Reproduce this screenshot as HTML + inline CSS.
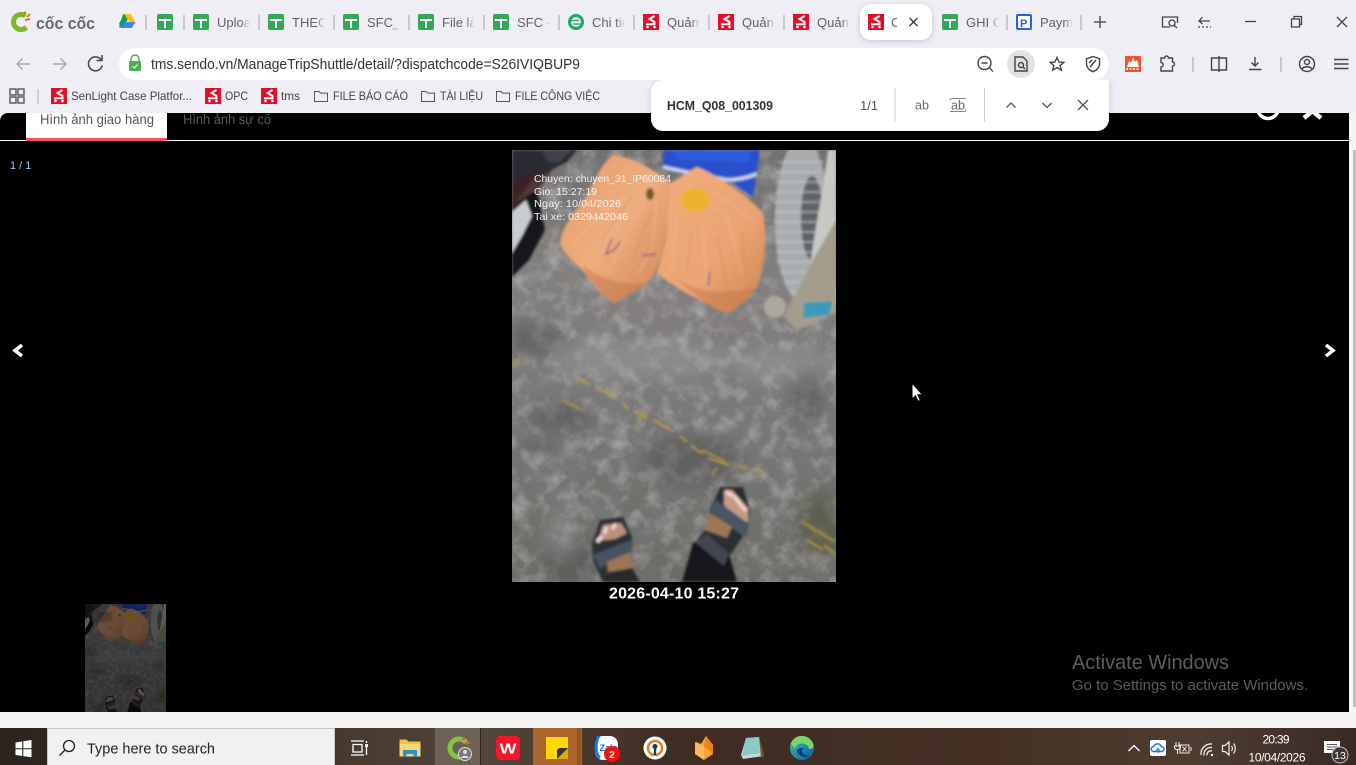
<!DOCTYPE html>
<html><head><meta charset="utf-8"><title>Trip detail</title>
<style>
html,body{margin:0;padding:0;width:1356px;height:765px;overflow:hidden;background:#eeeef4}
svg{display:block;font-family:"Liberation Sans","Noto Sans CJK SC",sans-serif}
</style></head>
<body>
<svg width="1356" height="765" viewBox="0 0 1356 765" xmlns="http://www.w3.org/2000/svg">
<defs>
<linearGradient id="fade"><stop offset="0" stop-color="#eeeef4" stop-opacity="0"/><stop offset="1" stop-color="#eeeef4"/></linearGradient>
<linearGradient id="floor" x1="0" y1="0" x2="0" y2="1"><stop offset="0" stop-color="#6f6d6a"/><stop offset=".3" stop-color="#84817f"/><stop offset=".6" stop-color="#7a7878"/><stop offset="1" stop-color="#6b6a64"/></linearGradient>
<linearGradient id="tb"><stop offset="0" stop-color="#2c231f"/><stop offset=".26" stop-color="#483a2f"/><stop offset=".36" stop-color="#524539"/><stop offset=".5" stop-color="#3f2c23"/><stop offset=".72" stop-color="#452f25"/><stop offset=".88" stop-color="#4e3d30"/><stop offset="1" stop-color="#392a26"/></linearGradient>
<linearGradient id="bag1" x1="0" y1="0" x2="1" y2="1"><stop offset="0" stop-color="#e49a68"/><stop offset=".5" stop-color="#eeae80"/><stop offset="1" stop-color="#cf8455"/></linearGradient>
<linearGradient id="bag2" x1="0" y1="0" x2="1" y2="1"><stop offset="0" stop-color="#f0ad7d"/><stop offset=".6" stop-color="#eba473"/><stop offset="1" stop-color="#d08353"/></linearGradient>
<linearGradient id="edg" x1="0" y1="0" x2="1" y2="1"><stop offset="0" stop-color="#36c8b0"/><stop offset="1" stop-color="#0c59a4"/></linearGradient>
<filter id="noise" x="0" y="0" width="100%" height="100%"><feTurbulence type="fractalNoise" baseFrequency=".028" numOctaves="5" seed="7"/><feColorMatrix values="0 0 0 0 .2  0 0 0 0 .2  0 0 0 0 .21  1.3 0 0 0 -.45"/></filter>
<filter id="noise2" x="0" y="0" width="100%" height="100%"><feTurbulence type="fractalNoise" baseFrequency=".06" numOctaves="4" seed="21"/><feColorMatrix values="0 0 0 0 .68  0 0 0 0 .67  0 0 0 0 .67  1 0 0 0 -.44"/></filter>
<filter id="b1"><feGaussianBlur stdDeviation="1.2"/></filter>
<filter id="b3"><feGaussianBlur stdDeviation="3"/></filter>
<filter id="b8"><feGaussianBlur stdDeviation="8"/></filter>
<filter id="sh" x="-20%" y="-20%" width="140%" height="150%"><feDropShadow dx="0" dy="1" stdDeviation="3" flood-color="#000" flood-opacity=".18"/></filter>
<clipPath id="pc"><rect width="324" height="432"/></clipPath>
<clipPath id="pageclip"><rect x="0" y="113" width="1349" height="599"/></clipPath>
<clipPath id="findclip"><rect x="630" y="80" width="726" height="70"/></clipPath>

<symbol id="gs" viewBox="0 0 16 16" overflow="visible"><rect width="16" height="16" rx="2" fill="#34a853"/><path d="M2 6h12M8 6v8" stroke="#fff" stroke-width="2" fill="none"/></symbol>
<symbol id="sd" viewBox="0 0 16 16" overflow="visible"><rect width="16" height="16" fill="#e20d26"/><path d="M11.500 2 6.500 5l5 3v2.200H3" stroke="#fff" stroke-width="2" fill="none"/><circle cx="4.500" cy="13" r="1.300" fill="#fff"/><circle cx="11.500" cy="13" r="1.300" fill="#fff"/></symbol>
<symbol id="fd" viewBox="0 0 14 12" overflow="visible"><path d="M.5 1.500h4.500l1.500 1.600h7v8.400H.5z" fill="none" stroke="#555" stroke-width="1"/></symbol>

<g id="photo" clip-path="url(#pc)">
 <rect width="324" height="432" fill="url(#floor)"/>
 <rect width="324" height="432" filter="url(#noise)"/>
 <rect width="324" height="432" filter="url(#noise2)"/>
 <g filter="url(#b8)" fill="#4e4d4e" opacity=".5">
  <ellipse cx="50" cy="267" rx="34" ry="14"/><ellipse cx="27" cy="298" rx="20" ry="7"/><ellipse cx="295" cy="245" rx="16" ry="30"/><ellipse cx="180" cy="310" rx="50" ry="25"/>
  <ellipse cx="20" cy="190" rx="30" ry="18"/><ellipse cx="310" cy="375" rx="25" ry="35" fill="#4d5038"/><ellipse cx="60" cy="410" rx="30" ry="25"/>
 </g>
 <g filter="url(#b8)" fill="#a3a1a3" opacity=".4"><ellipse cx="50" cy="385" rx="16" ry="26"/><ellipse cx="130" cy="210" rx="90" ry="20"/><ellipse cx="270" cy="215" rx="50" ry="18"/></g>
 <g filter="url(#b1)">
  <path d="M65 228l20 10 18 8 12 12 30 14 22 13 18 15 14 9 14 5 12 2 26 5" fill="none" stroke="#c2a03f" stroke-width="2.200" stroke-dasharray="14 7 22 9 9 6" opacity=".85"/>
  <path d="M50 250l20 10M125 270l10-6M190 300l24 12M200 325l5-7M222 336l3 8M0 215l8-6" fill="none" stroke="#b89a40" stroke-width="1.800"/>
  <path d="M290 372l25 15 9 5M295 390l16 10M312 395l12 10" fill="none" stroke="#9c8a40" stroke-width="3"/>

  <path d="M151 0h97l-7 47-20-14-70-13z" fill="#2a4fcb"/>
  <path d="M151 17c20 5 45 9 64 13 10 0 22-3 30-6" fill="none" stroke="#cdd7ea" stroke-width="3.500"/>
  <path d="M160 0h80l-3 12-70-2z" fill="#2d5be0"/>

  <path d="M0 0h65L55 12 20 30 0 56z" fill="#292c33"/><path d="M0 55 25 40l8 40-16 30L0 127z" fill="#17181b"/><path d="M0 62 14 50l6 16-10 20L0 103z" fill="#c9cdd2"/><path d="M30 0h30L48 12 36 12z" fill="#3f4248"/><path d="M0 30 40 20 30 35 0 60z" fill="#3f2020" opacity=".7"/>

  <path d="M101 5C125 8 145 22 158 33L155 73C152 100 148 120 135 133 122 140 110 150 101 153 90 145 80 135 75 125 60 110 48 100 48 93 50 75 65 60 72 50 80 35 88 15 101 5z" fill="url(#bag1)"/>
  <path d="M185 17C205 25 235 45 251 63 255 85 254 110 245 137 235 150 225 158 218 162 208 163 200 157 195 153 175 145 160 135 145 123 150 105 155 90 155 73L158 33C165 30 175 22 185 17z" fill="url(#bag2)"/>
  <path d="M70 115c20 15 40 20 65 18-12 8-24 16-34 20-10-8-22-20-31-38zM160 127c20 12 40 20 85 10-8 12-18 20-27 25-10 1-18-5-23-9z" fill="#c67a4b" opacity=".55"/>
  <path d="M130 40l-30 15-40 40M135 45l-20 40-20 40M145 50l-5 50-15 25M165 60l-5 60M190 70l5 70M215 65l15 60M175 35l35 30M200 40l40 30" fill="none" stroke="#f7c8a2" stroke-width="1.400" opacity=".4"/>
  <path d="M120 45l-30 45M140 60l-20 50M180 80l-5 40M205 85l10 55M230 80l5 50" fill="none" stroke="#c9824f" stroke-width="1.400" opacity=".4"/>
  <ellipse cx="183" cy="50" rx="15" ry="12" fill="#eeb230"/><ellipse cx="138" cy="44" rx="4" ry="6" fill="#6e5c28"/>
  <path d="M100 88l-6 16 8-4 6-8M130 106l14-2M198 122l-2 14" fill="none" stroke="#6d3a8a" stroke-width="1.200"/>

  <ellipse cx="290" cy="70" rx="27" ry="82" fill="#a9acae"/>
  <ellipse cx="300" cy="68" rx="11" ry="42" fill="#5f6469"/>
  <g stroke="#cfd1d2" stroke-width="1.300" opacity=".75" fill="none"><path d="M266 12h46M264 22h46M263 32h46M263 42h46M262 52h46M262 62h46M262 72h46M262 82h46M263 92h46M264 102h44M265 112h42M268 122h36M272 132h30M278 142h20"/></g>
  <path d="M316 0h8v70l-26 47c5-40 14-80 18-117z" fill="#c8c8c4"/>
  <path d="M298 115l26-45v93l-39 17-13-13z" fill="#a59d8c"/>
  <circle cx="263" cy="157" r="11" fill="#aea79d"/>
  <path d="M292 153l28-2-2 14-27 3z" fill="#3d9ab6"/>
 </g>
 <g filter="url(#b1)">
  <path d="M208 337l23 0 7 23-3 20-20 30-30-20 10-13 3-17z" fill="#2c2f34"/>
  <path d="M212 340l8 0 16 18 0 14-10-2-14-15z" fill="#c49a88"/><path d="M214 342l7 4M222 346l6 8M228 354l6 7" stroke="#f1d7cf" stroke-width="3.400"/>
  <path d="M204 350l33 24-3 14-36-26z" fill="#495563"/>
  <path d="M198 363l22 14-5 11-22-8z" fill="#9d7656"/>
  <path d="M170 432l11-39 14-6 23 20 7 25z" fill="#15161b"/><path d="M183 392l12-8 22 20-5 12z" fill="#3f4650"/>
  <path d="M80 393l8-23 23-3 9 20v30l8 15H91l-10-22z" fill="#2b3036"/>
  <path d="M86 391l5-16 18-2 6 10-12 6z" fill="#b9907e"/><path d="M85 392l5-6M92 384l3-7M100 379l4-5" stroke="#eed5cc" stroke-width="3.800"/>
  <path d="M81 405l38-15 1 13-32 15z" fill="#465361"/>
  <path d="M95 412l24-10 2 16-25 4z" fill="#9b7556"/>
  <path d="M92 432l4-8 22-6 10 14z" fill="#262a2f"/>
 </g>
</g>
</defs>

<!-- window chrome background -->
<rect width="1356" height="765" fill="#eeeef4"/>

<!-- Coc Coc logo -->
<circle cx="21" cy="22" r="7.500" fill="none" stroke="#7ab82e" stroke-width="5" stroke-dasharray="34 14" transform="rotate(45 21 22)"/>
<path d="M24 13l2-1M27 17l3-3M25 20l5-1" stroke="#e8622a" stroke-width="1.800"/>
<text x="36" y="29" font-size="17" font-weight="bold" fill="#6a6a6a" textLength="59" lengthAdjust="spacingAndGlyphs">cốc cốc</text>

<!-- drive -->
<path d="M123 14h8l-4 7-4 7-4-1z" fill="#1fa463"/><path d="M123 14h8l5 10-4.500 0z" fill="#ffc107"/><path d="M119.500 27l3-5h12.500l-3 6h-11z" fill="#4285f4"/><path d="M124 14l-5 10 3 3 5-9z" fill="#0f9d58"/>

<!-- tab icons -->
<use href="#gs" x="157" y="14" width="16" height="16"/><use href="#gs" x="193" y="14" width="16" height="16"/><use href="#gs" x="268" y="14" width="16" height="16"/><use href="#gs" x="343" y="14" width="16" height="16"/><use href="#gs" x="418" y="14" width="16" height="16"/><use href="#gs" x="493" y="14" width="16" height="16"/>
<circle cx="576" cy="22" r="6.500" fill="none" stroke="#1aa867" stroke-width="3"/><path d="M571 20.500h8M573 24h8" stroke="#1aa867" stroke-width="1.300"/>
<use href="#sd" x="643" y="14" width="16" height="16"/><use href="#sd" x="718" y="14" width="16" height="16"/><use href="#sd" x="793" y="14" width="16" height="16"/>

<g font-size="13" fill="#5f6368">
<text x="217" y="27">Upload</text><text x="292" y="27">THEO</text><text x="367" y="27">SFC_T</text><text x="442" y="27">File là</text><text x="517" y="27">SFC -</text><text x="592" y="27">Chi tiết</text><text x="667" y="27">Quản</text><text x="742" y="27">Quản</text><text x="817" y="27">Quản</text><text x="966" y="27">GHI C</text><text x="1040" y="27">Payment</text>
</g>
<g fill="url(#fade)"><rect x="241" y="12" width="9" height="20"/><rect x="316" y="12" width="9" height="20"/><rect x="391" y="12" width="9" height="20"/><rect x="466" y="12" width="9" height="20"/><rect x="541" y="12" width="9" height="20"/><rect x="616" y="12" width="9" height="20"/><rect x="691" y="12" width="9" height="20"/><rect x="766" y="12" width="9" height="20"/><rect x="841" y="12" width="9" height="20"/><rect x="990" y="12" width="9" height="20"/><rect x="1064" y="12" width="9" height="20"/></g>
<g fill="#eeeef4"><rect x="250" y="12" width="17" height="20"/><rect x="325" y="12" width="17" height="20"/><rect x="400" y="12" width="17" height="20"/><rect x="475" y="12" width="17" height="20"/><rect x="550" y="12" width="17" height="20"/><rect x="625" y="12" width="17" height="20"/><rect x="700" y="12" width="17" height="20"/><rect x="775" y="12" width="17" height="20"/><rect x="850" y="12" width="9" height="20"/><rect x="999" y="12" width="16" height="20"/><rect x="1073" y="12" width="19" height="20"/></g>
<!-- separators -->
<g stroke="#b8b8bf" stroke-width="1.400"><path d="M146 15v15M184 15v15M259 15v15M334 15v15M409 15v15M484 15v15M559 15v15M634 15v15M709 15v15M784 15v15M1007 15v15M1081 15v15"/></g>

<!-- active tab -->
<rect x="860" y="4" width="72" height="36" rx="11" fill="#fff" filter="url(#sh)"/>
<use href="#sd" x="868" y="14" width="16" height="16"/>
<text x="891" y="27" font-size="13" fill="#5f6368">C</text><rect x="897" y="12" width="8" height="20" fill="#fff"/>
<path d="M909.500 18l8 8M917.500 18l-8 8" stroke="#333" stroke-width="1.300"/>
<use href="#gs" x="942" y="14" width="16" height="16"/>
<rect x="1016" y="14" width="16" height="16" rx="2" fill="#2d5be3"/><rect x="1018" y="16" width="12" height="12" fill="#fff"/><text x="1020" y="27" font-size="11" font-weight="bold" fill="#2d5be3">P</text>
<path d="M1100 16v12M1094 22h12" stroke="#555" stroke-width="1.500"/>

<!-- titlebar right -->
<g fill="none" stroke="#444" stroke-width="1.300">
<path d="M1170 27h-7.500v-10h15v6"/><circle cx="1172" cy="23" r="3"/><path d="M1174 25l3 3"/>
<path d="M1210 21h-11m3.500-4l-3.500 4 3.500 3M1198 27h2m2 0h2m2 0h2m2 0h1" />
<path d="M1245 21.500h11"/>
<path d="M1291.500 19h8v8h-8zM1294 19v-2.500h7.500v8H1299.500"/>
<path d="M1337 17l10 10M1347 17l-10 10"/>
</g>

<!-- nav -->
<g fill="none" stroke-width="1.500">
<path d="M30 64H17m5.500-5.500L17 64l5.500 5.500" stroke="#a9a9ae"/>
<path d="M53 64h13m-5.500-5.500L66 64l-5.500 5.500" stroke="#a9a9ae"/>
<path d="M101 59.500a7 7 0 1 0 1.300 6" stroke="#444"/><path d="M102 55v5.500h-5.500" stroke="#444"/>
</g>
<rect x="119" y="48" width="990" height="32" rx="16" fill="#fff"/>
<path d="M131 62v-3a4 4 0 0 1 8 0v3" fill="none" stroke="#4caf50" stroke-width="1.500"/><rect x="129" y="61" width="12" height="10" rx="1.500" fill="#4caf50"/><path d="M132.500 66l2 2 3-3.500" stroke="#fff" fill="none"/>
<text x="151" y="69" font-size="14.500" fill="#333" textLength="429" lengthAdjust="spacingAndGlyphs">tms.sendo.vn/ManageTripShuttle/detail/?dispatchcode=S26IVIQBUP9</text>

<circle cx="1021" cy="64" r="14" fill="#e2e2e2"/>
<g fill="none" stroke="#444" stroke-width="1.400">
<circle cx="984.500" cy="63" r="6.500"/><path d="M981.500 63h6M989.500 68l3.500 3.500"/>
<path d="M1015 57h8l4 4v10h-12z"/><circle cx="1021" cy="65" r="2.500"/><path d="M1023 67l2 2"/>
<path d="M1057 57.500l2 4.500 4.800.4-3.700 3.100 1.200 4.700-4.300-2.600-4.300 2.600 1.200-4.700-3.700-3.100 4.800-.4z"/>
<path d="M1093 56.500l6.500 2.200v5c0 4-3 6.500-6.500 8-3.500-1.500-6.500-4-6.500-8v-5z"/><path d="M1090 67l6-7M1089 63l3-3" />
<path d="M1161 59h3.500a2 2 0 0 1 4 0h4v4a2 2 0 0 1 0 4v5h-11.500v-4a2.200 2.200 0 0 0 0-4.500z" transform="translate(0 -1)"/>
<path d="M1211.500 58h15v12h-15zM1219 56v16"/>
<path d="M1255 57v9m-3.500-3.500 3.500 3.500 3.500-3.500M1249 69.500h12.500"/>
<circle cx="1307" cy="64" r="7.500"/><circle cx="1307" cy="62" r="2.500"/><path d="M1302 69c2-3 8-3 10 0"/>
<path d="M1334 59.500h14.500M1334 64h14.500M1334 68.500h14.500" stroke-width="1.600"/>
</g>
<path d="M1125 56h16v16h-16z" fill="#f0532a"/><path d="M1127 67l2-6 2 2 2-6 2 5 2-2 2 7z" fill="#fff"/><path d="M1126 69h14" stroke="#fff" stroke-dasharray="2 1.500" stroke-width="1.500"/>
<path d="M1193 57v15M1281 57v15" stroke="#bbb" stroke-width="1.500"/>

<!-- bookmarks -->
<g fill="none" stroke="#555" stroke-width="1.400"><rect x="10" y="89" width="6" height="6"/><rect x="18" y="89" width="6" height="6"/><rect x="10" y="97" width="6" height="6"/><rect x="18" y="97" width="6" height="6"/></g>
<path d="M38 89v15" stroke="#bbb" stroke-width="1.200"/>
<use href="#sd" x="51" y="88" width="16" height="16"/><use href="#sd" x="205" y="88" width="16" height="16"/><use href="#sd" x="261" y="88" width="16" height="16"/>
<use href="#fd" x="314" y="90" width="14" height="12"/><use href="#fd" x="421" y="90" width="14" height="12"/><use href="#fd" x="496" y="90" width="14" height="12"/>
<g font-size="12" fill="#444">
<text x="71" y="100" textLength="121" lengthAdjust="spacingAndGlyphs">SenLight Case Platfor...</text>
<text x="225" y="100" textLength="23" lengthAdjust="spacingAndGlyphs">OPC</text><text x="281" y="100" textLength="19" lengthAdjust="spacingAndGlyphs">tms</text>
<text x="333" y="100" textLength="75" lengthAdjust="spacingAndGlyphs">FILE BÁO CÁO</text>
<text x="440" y="100" textLength="43" lengthAdjust="spacingAndGlyphs">TÀI LIỆU</text>
<text x="515" y="100" textLength="85" lengthAdjust="spacingAndGlyphs">FILE CÔNG VIỆC</text>
</g>

<!-- page -->
<rect x="0" y="113" width="1356" height="615" fill="#f4f4f4"/>
<path d="M0 121a8 8 0 0 1 8-8H1349V712H0z" fill="#000"/>
<rect x="1353" y="150" width="3" height="557" fill="#c1c1c1"/>
<g clip-path="url(#pageclip)">
 <rect x="26" y="100" width="141" height="38" fill="#fff"/>
 <rect x="26" y="138" width="141" height="3" fill="#f0545e"/>
 <text x="40" y="124" font-size="13.500" fill="#555" textLength="114" lengthAdjust="spacingAndGlyphs">Hình ảnh giao hàng</text>
 <text x="183" y="124" font-size="13.500" fill="#5a5a5a" textLength="88" lengthAdjust="spacingAndGlyphs">Hình ảnh sự cố</text>
 <circle cx="1268" cy="108" r="10.500" fill="none" stroke="#fff" stroke-width="3.500"/>
 <path d="M1304 104l17 14M1321 104l-17 14" stroke="#fff" stroke-width="4.500"/>
</g>
<rect x="167" y="140" width="1182" height="1" fill="#fff"/><rect x="0" y="140" width="26" height="1" fill="#fff"/>
<text x="10" y="169" font-size="11" fill="#9cc8ee">1 / 1</text>

<use href="#photo" transform="translate(512 150)"/>
<g transform="translate(512 150)" font-size="10.300" fill="#f2f2f2">
<text x="22" y="32" textLength="137" lengthAdjust="spacingAndGlyphs">Chuyen: chuyen_31_IP60084</text>
<text x="22" y="45" textLength="63" lengthAdjust="spacingAndGlyphs">Gio: 15:27:19</text>
<text x="22" y="57" textLength="87" lengthAdjust="spacingAndGlyphs">Ngay: 10/04/2026</text>
<text x="22" y="70" textLength="94" lengthAdjust="spacingAndGlyphs">Tai xe: 0329442046</text>
</g>
<text x="674" y="598.500" font-size="16" font-weight="bold" fill="#fff" text-anchor="middle" textLength="130">2026-04-10 15:27</text>

<use href="#photo" transform="translate(85 604) scale(.25)" opacity=".45"/>
<g fill="#222" opacity=".35" filter="url(#b1)"><rect x="90" y="612" width="22" height="10"/></g>

<path d="M22 345l-7 5.500 7 5.500" fill="none" stroke="#fff" stroke-width="3.500"/>
<path d="M1326 345l7 5.500-7 5.500" fill="none" stroke="#fff" stroke-width="3.500"/>

<text x="1072" y="669" font-size="20" fill="#5d5d5d" textLength="157" lengthAdjust="spacingAndGlyphs">Activate Windows</text>
<text x="1072" y="690" font-size="14.500" fill="#5d5d5d" textLength="236" lengthAdjust="spacingAndGlyphs">Go to Settings to activate Windows.</text>
<!-- cursor -->
<path d="M912 383v16l3.500-3.300 2.500 5.600 2.300-1-2.500-5.500h4.700z" fill="#fff" stroke="#000" stroke-width="1"/>

<!-- find bar -->
<g clip-path="url(#findclip)"><path d="M663 80H1109V119a12 12 0 0 1-12 12H663a12 12 0 0 1-12-12V92a12 12 0 0 1 12-12z" fill="#fff" filter="url(#sh)"/></g>
<text x="667" y="110" font-size="13" font-weight="bold" fill="#333" textLength="106" lengthAdjust="spacingAndGlyphs">HCM_Q08_001309</text>
<text x="860" y="110" font-size="13" fill="#555" textLength="18">1/1</text>
<path d="M895 88v34M984.500 88v34" stroke="#cfcfcf" stroke-width="1"/>
<text x="915" y="109.500" font-size="12.500" fill="#666">ab</text>
<text x="951" y="109.500" font-size="12.500" fill="#666">ab</text>
<path d="M950 100.500c0-1.500 1-2 2-2h14M966 109.500c0 1.500-1 2-2 2h-14" fill="none" stroke="#888" stroke-width="1"/>
<g fill="none" stroke="#555" stroke-width="1.300"><path d="M1006.500 107.500l4.500-4.500 4.500 4.500M1042.500 103l4.500 4.500 4.500-4.500M1078 100l10 10M1088 100l-10 10"/></g>

<!-- taskbar -->
<rect y="728" width="1356" height="37" fill="url(#tb)"/>
<path d="M15.500 742.500l6.700-1v6.700h-6.700zM23.300 741.300l8.200-1.300v8.200h-8.200zM15.500 749.300h6.700v6.700l-6.700-1zM23.300 749.300h8.200v8l-8.200-1.200z" fill="#fff"/>
<rect x="47.500" y="728.500" width="287" height="37" fill="#f1f1f1" stroke="#c4c4c4"/>
<circle cx="69" cy="746" r="5.500" fill="none" stroke="#222" stroke-width="1.300"/><path d="M65 750l-5.500 5.500" stroke="#222" stroke-width="1.300"/>
<text x="87" y="753.500" font-size="14.500" fill="#222" textLength="128" lengthAdjust="spacingAndGlyphs">Type here to search</text>
<g fill="none" stroke="#fff" stroke-width="1.300"><path d="M351 741h13M353 744.500h9v7.500h-9zM351 755h13M366.500 741v2M366.500 747v8"/></g><rect x="365" y="744" width="3" height="3" fill="#fff"/>
<path d="M399.500 739.500h7l2 2h12v15h-21z" fill="#f2be47"/><path d="M399.500 744h21v12.500h-21z" fill="#f7d774"/><path d="M403 750h14v7h-3.500v-3h-7v3H403z" fill="#2a8fd8"/>
<rect x="435" y="728" width="45" height="37" fill="#6b6155"/><path d="M480 728h1v37h-1z" fill="#2f2620"/>
<circle cx="459" cy="748" r="9" fill="none" stroke="#82c341" stroke-width="5" stroke-dasharray="44 14" transform="rotate(40 459 748)"/>
<path d="M462 740l3-2M466 744l4-2" stroke="#e8622a" stroke-width="2"/>
<circle cx="465" cy="754" r="6.500" fill="#777" stroke="#ddd"/><circle cx="465" cy="752" r="2" fill="#ddd"/><path d="M461 758c1-3 7-3 8 0" fill="#ddd"/>
<rect x="496" y="736" width="24" height="24" rx="4" fill="#f5142b"/><text x="508" y="753.500" font-size="15" font-weight="bold" fill="#fff" text-anchor="middle" textLength="17" lengthAdjust="spacingAndGlyphs">W</text>
<rect x="533" y="728" width="49" height="37" fill="#ab662c"/><rect x="577" y="728" width="4" height="37" fill="#94551f"/>
<path d="M546 737h22v22h-22z" fill="#ffd800"/><path d="M557 759l11-11v11z" fill="#e0a800"/><path d="M557 759v-8a3 3 0 0 1 3-3h8z" fill="#333"/>
<rect x="595" y="736" width="23" height="24" rx="8" fill="#fff"/><path d="M599 736c-3 3-5 18 1 22" stroke="#0c7bf2" stroke-width="3" fill="none"/><text x="599.500" y="751" font-size="9" font-weight="bold" fill="#0c6ff0">Zalo</text>
<circle cx="612" cy="754" r="8" fill="#f70d0d"/><text x="612" y="758" font-size="10.500" font-weight="bold" fill="#fff" text-anchor="middle">2</text>
<circle cx="655" cy="748" r="11.500" fill="#fff"/><circle cx="655" cy="748" r="7" fill="none" stroke="#e87d1e" stroke-width="2.500"/><circle cx="655" cy="746.500" r="2.500" fill="#123a5e"/><rect x="653.800" y="747" width="2.400" height="8" fill="#123a5e"/>
<path d="M706 736l7 9v9l-9 6-9-6 1-12 5 2z" fill="#f7a33a"/><path d="M706 736l-2 10 9 8v-9z" fill="#e8851e"/><path d="M695 742l9 4v14l-9-6z" fill="#fbb85c"/>
<path d="M746 738l13-1 5 19-21 3-2-4z" fill="#b9dcdc"/><path d="M746 738l13-1 1 16-18 3z" fill="#8fc7c7"/><path d="M759 737l5 19-3 2z" fill="#6a5a36"/>
<circle cx="802" cy="748" r="12" fill="url(#edg)"/><path d="M795 750a7 6 0 0 1 14-1c4 0 5-2 4.500-4a12 12 0 0 0-23-1 9 9 0 0 1 4.500 6z" fill="#7ad46a"/><path d="M797 751c0 3 4 6 8 6 2 0 4-1 5-2-6 1-8-2-8-4 0-1.500 1-3 3-3-4 0-8 0-8 3z" fill="#0a3c78"/>

<path d="M1128.500 751l5.500-5.500 5.500 5.500" fill="none" stroke="#fff" stroke-width="1.300"/>
<rect x="1150" y="740" width="16" height="16" rx="2" fill="#fff"/><path d="M1153.500 751.500a2.500 2.500 0 0 1 .3-5 4 4 0 0 1 7.500 0 2.500 2.500 0 0 1 .3 5z" fill="none" stroke="#1e78e8" stroke-width="1.500"/><path d="M1158 753v-4m-1.800 1.500 1.800-2 1.800 2" stroke="#1e78e8" fill="none"/>
<g fill="none" stroke="#eee" stroke-width="1"><rect x="1180" y="745" width="9" height="8"/><path d="M1191 747v4M1182.500 746.500l4 5M1186.500 746.500l-4 5M1176 742v4m3-4v4m-4.500 0h6v2l-1.500 1.500h-3L1174.500 748zM1177.500 750v4"/>
<path d="M1201 755a10 10 0 0 1 11-11M1204 755.500a7 7 0 0 1 8-8M1207 755.500a4 4 0 0 1 5-4.500" stroke-width="1.300"/>
<path d="M1222.500 745.500h2.500l4-3.500v13l-4-3.500h-2.500zM1231.500 746a4 4 0 0 1 0 5M1233.500 743.500a8 8 0 0 1 0 10" stroke-width="1.200"/></g>
<circle cx="1212" cy="755" r="1.200" fill="#eee"/>
<text x="1276" y="743.500" font-size="12" fill="#fff" text-anchor="middle" textLength="27">20:39</text>
<text x="1277" y="761.500" font-size="12" fill="#fff" text-anchor="middle" textLength="57">10/04/2026</text>
<path d="M1324 741h16v12h-5l-3 3v-3h-8z" fill="#fff"/><path d="M1327 744.500h10M1327 747h10M1327 749.500h10" stroke="#555"/>
<circle cx="1340" cy="755" r="8" fill="#3b3633" stroke="#bbb"/><text x="1340" y="759" font-size="10.500" fill="#fff" text-anchor="middle">13</text>
</svg>
</body></html>
